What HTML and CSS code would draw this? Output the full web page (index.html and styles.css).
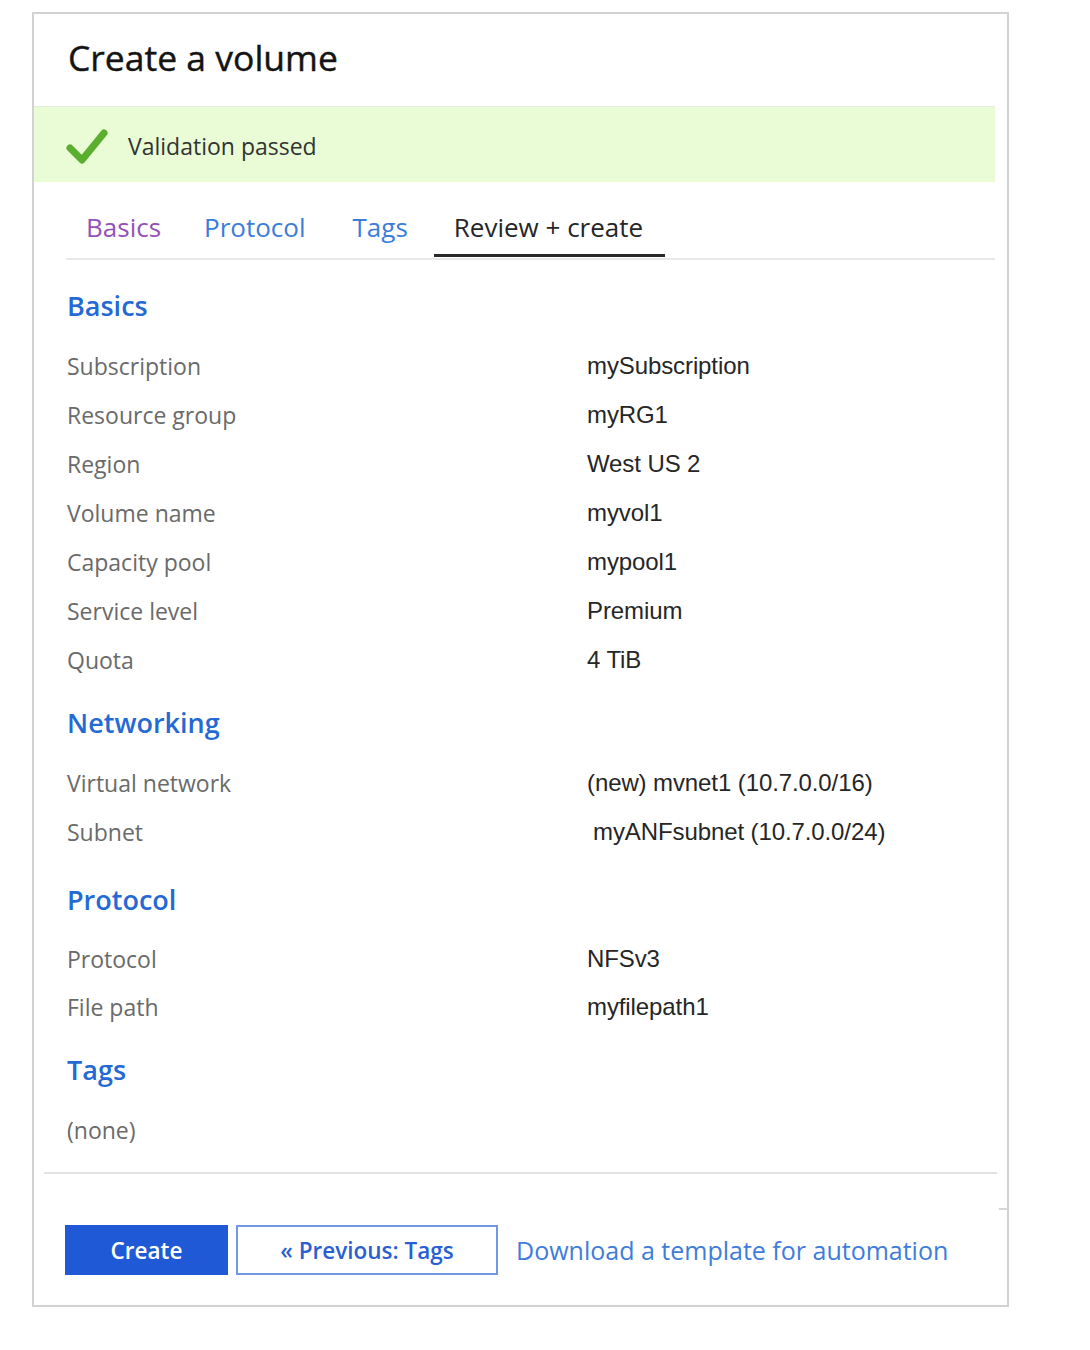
FILE: index.html
```html
<!DOCTYPE html>
<html lang="en">
<head>
<meta charset="utf-8">
<title>Create a volume</title>
<link rel="stylesheet" href="styles.css">
</head>
<body>
<div class="card">
  <header class="header">
    <h1 class="title">Create a volume</h1>
  </header>
  <div class="banner">
    <svg class="check" width="42" height="38" viewBox="0 0 42 38" aria-hidden="true">
      <path d="M4 21 L16 33 L38 6" fill="none" stroke="#5cae2e" stroke-width="7" stroke-linecap="round" stroke-linejoin="round"/>
    </svg>
    <span class="banner-text">Validation passed</span>
  </div>
  <div class="content">
    <nav class="tabs">
      <a class="tab visited">Basics</a>
      <a class="tab">Protocol</a>
      <a class="tab">Tags</a>
      <a class="tab active">Review + create</a>
    </nav>

    <section class="section">
      <h2 class="section-title">Basics</h2>
      <div class="row"><span class="label">Subscription</span><span class="value">mySubscription</span></div>
      <div class="row"><span class="label">Resource group</span><span class="value">myRG1</span></div>
      <div class="row"><span class="label">Region</span><span class="value">West US 2</span></div>
      <div class="row"><span class="label">Volume name</span><span class="value">myvol1</span></div>
      <div class="row"><span class="label">Capacity pool</span><span class="value">mypool1</span></div>
      <div class="row"><span class="label">Service level</span><span class="value">Premium</span></div>
      <div class="row"><span class="label">Quota</span><span class="value">4 TiB</span></div>
    </section>

    <section class="section">
      <h2 class="section-title">Networking</h2>
      <div class="row"><span class="label">Virtual network</span><span class="value">(new) mvnet1 (10.7.0.0/16)</span></div>
      <div class="row"><span class="label">Subnet</span><span class="value indent">myANFsubnet (10.7.0.0/24)</span></div>
    </section>

    <section class="section section-wide">
      <h2 class="section-title">Protocol</h2>
      <div class="row"><span class="label">Protocol</span><span class="value">NFSv3</span></div>
      <div class="row"><span class="label">File path</span><span class="value">myfilepath1</span></div>
    </section>

    <section class="section">
      <h2 class="section-title">Tags</h2>
      <div class="row"><span class="label">(none)</span></div>
    </section>
  </div>
  <footer class="footer">
    <button class="btn btn-primary">Create</button>
    <button class="btn btn-secondary">« Previous: Tags</button>
    <a class="link">Download a template for automation</a>
  </footer>
</div>
</body>
</html>
```

FILE: styles.css
```css
html, body {
  margin: 0;
  padding: 0;
  background: #ffffff;
}

body {
  padding: 12px 0 0 32px;
  font-family: "Open Sans", "Noto Sans", sans-serif;
  color: #222;
}

.card {
  position: relative;
  width: 973px;
  height: 1291px;
  border: 2px solid #d2d2d2;
  display: flex;
  flex-direction: column;
}

.card::after {
  content: "";
  position: absolute;
  right: 0;
  top: 1194px;
  width: 8px;
  height: 2px;
  background: #d6d6d6;
}

.header {
  height: 92px;
  display: flex;
  align-items: center;
  padding-left: 34px;
  padding-bottom: 6px;
  box-sizing: border-box;
}

.title {
  margin: 0;
  font-size: 35.5px;
  font-weight: 500;
  color: #141414;
  -webkit-text-stroke: 0.4px #141414;
}

.banner {
  margin-right: 12px;
  height: 75px;
  border-top: 1px solid #e3ece0;
  background: #e9fcd5;
  display: flex;
  align-items: center;
  padding-left: 32px;
}

.check {
  display: block;
  margin-top: 2px;
}

.banner-text {
  margin-left: 20px;
  margin-top: 2px;
  font-size: 23px;
  color: #333;
}

.content {
  padding: 0 12px 0 32px;
  flex: 1;
}

.tabs {
  display: flex;
  gap: 3px;
  padding-top: 17px;
  padding-bottom: 1px;
  border-bottom: 2px solid #e8e8e8;
}

.tab {
  padding: 0 20px;
  height: 55px;
  display: flex;
  align-items: center;
  font-size: 26px;
  color: #3c7ddc;
  border-bottom: 3px solid transparent;
}

.tab:nth-child(2) {
  padding-right: 24px;
}

.tab:nth-child(3) {
  padding-right: 23px;
}

.tab.visited {
  color: #9352b8;
}

.tab.active {
  color: #262626;
  border-bottom-color: #2a2a2a;
  padding-right: 22px;
}

.section {
  display: flex;
  flex-direction: column;
  margin-top: 19px;
}

.section-wide {
  margin-top: 24px;
}

.tabs + .section {
  margin-top: 26px;
}

.section-title {
  margin: 0 0 15px 1px;
  height: 40px;
  line-height: 40px;
  font-size: 27px;
  font-weight: 600;
  color: #2569d4;
}

.section-wide .row {
  height: 48px;
}

.row {
  display: grid;
  grid-template-columns: 520px 1fr;
  height: 49px;
  align-items: center;
  padding-left: 1px;
}

.label {
  font-size: 23px;
  color: #6a6a6a;
}

.value {
  font-family: "Liberation Sans", Arial, sans-serif;
  font-size: 24px;
  color: #262626;
  letter-spacing: -0.1px;
}

.value.indent {
  padding-left: 6px;
}

.footer {
  margin: 0 10px 30px 10px;
  border-top: 2px solid #e2e2e2;
  padding: 51px 0 0 21px;
  display: flex;
  align-items: center;
}

.btn {
  height: 50px;
  font-family: "Open Sans", "Noto Sans", sans-serif;
  font-size: 22.5px;
  font-weight: 600;
  padding: 0;
  box-sizing: border-box;
}

.btn-primary {
  width: 163px;
  background: #2059d6;
  color: #fff;
  border: 1px solid #2059d6;
}

.btn-secondary {
  margin-left: 8px;
  width: 262px;
  background: #fff;
  color: #2a5fd2;
  border: 2px solid #6f9ae3;
}

.link {
  margin-left: 18px;
  font-size: 25px;
  color: #3e7ddb;
}
```
